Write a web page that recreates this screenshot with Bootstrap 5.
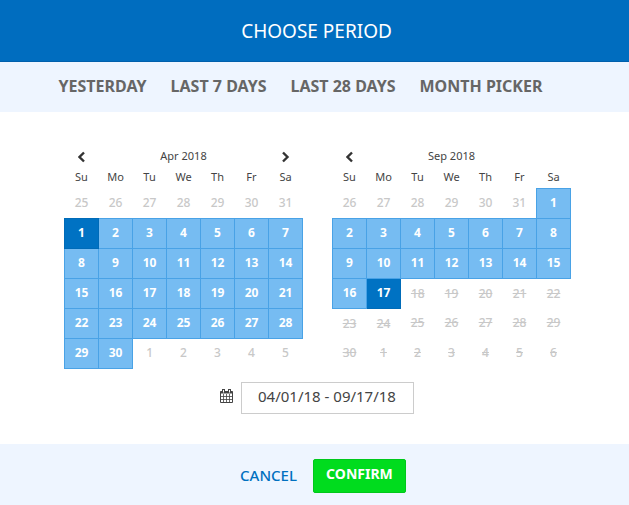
<!DOCTYPE html>
<html lang="en">
<head>
<meta charset="utf-8">
<meta name="viewport" content="width=device-width, initial-scale=1">
<title>Choose period</title>
<link href="https://cdn.jsdelivr.net/npm/bootstrap@5.3.0/dist/css/bootstrap.min.css" rel="stylesheet">
<style>
body { font-family: "Noto Sans", "Open Sans", sans-serif; color: #444; background: #fff; }
.title-bar { background: #006dbf; border-bottom: 1px solid #005fac; padding: 16px 12px 15px 16px; }
.title-bar h1 { font-size: 19px; line-height: 30px; font-weight: 400; }
.tint { background: #eef5ff; }
.presets { gap: 24px; padding: 12px 28px 14px 0; }
.preset { font-size: 16px; line-height: 24px; font-weight: 700; color: #666; }
.months { gap: 29px; padding: 33px 0 0 6px; }
.cal { border-collapse: collapse; table-layout: fixed; width: 239px; font-size: 12px; text-align: center; }
.cal th { font-size: 11px; font-weight: 400; height: 22px; padding: 0; line-height: 20px; }
.cal tr:first-child th { height: 21px; }
.cal td { height: 30px; padding: 0; color: #c8c8c8; }
.cal button { display: block; width: 100%; border: 0; padding: 0; background: none; color: inherit; font-weight: inherit; line-height: 20px; }
.cal td button { line-height: 28px; font-weight: 500; }
.cal .in { background: #76bcf2; border: 1px solid #49a2e6; color: #fff; }
.cal .end { background: #0072c3; border: 1px solid #006bb8; color: #fff; }
.cal .in button, .cal .end button { font-weight: 700; }
.cal .off button { text-decoration: line-through; }
.range { gap: 7px; padding: 13px 0 30px 4px; }
.range label { padding-bottom: 4px; }
.range input { width: 173px; height: 32px; border: 1px solid #ccc; border-radius: 0; padding: 0 8px 4px; font-size: 15px; text-align: center; color: #444; }
.actions { gap: 16px; padding: 15px 0 12px 17px; }
.cancel { color: #0070c0; font-size: 15px; line-height: 24px; font-weight: 500; }
.confirm { --bs-btn-bg: #00dc1e; --bs-btn-hover-bg: #00c81b; --bs-btn-color: #fff; --bs-btn-hover-color: #fff; --bs-btn-border-color: #00c81b; border-radius: 2px; width: 93px; height: 34px; padding: 0 0 4px; font-size: 14px; font-weight: 700; }
</style>
<script src="https://cdn.jsdelivr.net/npm/bootstrap@5.3.0/dist/js/bootstrap.bundle.min.js" defer></script>
</head>
<body class="min-vh-100 d-flex flex-column">
<header class="title-bar text-white text-center"><h1 class="m-0">CHOOSE PERIOD</h1></header>
<nav class="tint presets d-flex justify-content-center" aria-label="Presets">
  <a href="#" class="preset text-decoration-none">YESTERDAY</a>
  <a href="#" class="preset text-decoration-none">LAST 7 DAYS</a>
  <a href="#" class="preset text-decoration-none">LAST 28 DAYS</a>
  <a href="#" class="preset text-decoration-none">MONTH PICKER</a>
</nav>
<main>
  <div class="months d-flex justify-content-center">
    <table class="cal">
      <thead>
        <tr><th><button type="button" aria-label="Previous month"><svg width="8" height="12" viewBox="0 0 8 12" fill="none" stroke="#333" stroke-width="2.4"><path d="M6 1.500 1.500 6 6 10.500"/></svg></button></th><th colspan="5">Apr 2018</th><th><button type="button" aria-label="Next month"><svg width="8" height="12" viewBox="0 0 8 12" fill="none" stroke="#333" stroke-width="2.4"><path d="M1 1.500 5.500 6 1 10.500"/></svg></button></th></tr>
        <tr><th>Su</th><th>Mo</th><th>Tu</th><th>We</th><th>Th</th><th>Fr</th><th>Sa</th></tr>
      </thead>
      <tbody>
        <tr><td><button>25</button></td><td><button>26</button></td><td><button>27</button></td><td><button>28</button></td><td><button>29</button></td><td><button>30</button></td><td><button>31</button></td></tr>
        <tr><td class="end"><button>1</button></td><td class="in"><button>2</button></td><td class="in"><button>3</button></td><td class="in"><button>4</button></td><td class="in"><button>5</button></td><td class="in"><button>6</button></td><td class="in"><button>7</button></td></tr>
        <tr><td class="in"><button>8</button></td><td class="in"><button>9</button></td><td class="in"><button>10</button></td><td class="in"><button>11</button></td><td class="in"><button>12</button></td><td class="in"><button>13</button></td><td class="in"><button>14</button></td></tr>
        <tr><td class="in"><button>15</button></td><td class="in"><button>16</button></td><td class="in"><button>17</button></td><td class="in"><button>18</button></td><td class="in"><button>19</button></td><td class="in"><button>20</button></td><td class="in"><button>21</button></td></tr>
        <tr><td class="in"><button>22</button></td><td class="in"><button>23</button></td><td class="in"><button>24</button></td><td class="in"><button>25</button></td><td class="in"><button>26</button></td><td class="in"><button>27</button></td><td class="in"><button>28</button></td></tr>
        <tr><td class="in"><button>29</button></td><td class="in"><button>30</button></td><td><button>1</button></td><td><button>2</button></td><td><button>3</button></td><td><button>4</button></td><td><button>5</button></td></tr>
      </tbody>
    </table>
    <table class="cal">
      <thead>
        <tr><th><button type="button" aria-label="Previous month"><svg width="8" height="12" viewBox="0 0 8 12" fill="none" stroke="#333" stroke-width="2.4"><path d="M6 1.500 1.500 6 6 10.500"/></svg></button></th><th colspan="5">Sep 2018</th><th></th></tr>
        <tr><th>Su</th><th>Mo</th><th>Tu</th><th>We</th><th>Th</th><th>Fr</th><th>Sa</th></tr>
      </thead>
      <tbody>
        <tr><td><button>26</button></td><td><button>27</button></td><td><button>28</button></td><td><button>29</button></td><td><button>30</button></td><td><button>31</button></td><td class="in"><button>1</button></td></tr>
        <tr><td class="in"><button>2</button></td><td class="in"><button>3</button></td><td class="in"><button>4</button></td><td class="in"><button>5</button></td><td class="in"><button>6</button></td><td class="in"><button>7</button></td><td class="in"><button>8</button></td></tr>
        <tr><td class="in"><button>9</button></td><td class="in"><button>10</button></td><td class="in"><button>11</button></td><td class="in"><button>12</button></td><td class="in"><button>13</button></td><td class="in"><button>14</button></td><td class="in"><button>15</button></td></tr>
        <tr><td class="in"><button>16</button></td><td class="end"><button>17</button></td><td class="off"><button>18</button></td><td class="off"><button>19</button></td><td class="off"><button>20</button></td><td class="off"><button>21</button></td><td class="off"><button>22</button></td></tr>
        <tr><td class="off"><button>23</button></td><td class="off"><button>24</button></td><td class="off"><button>25</button></td><td class="off"><button>26</button></td><td class="off"><button>27</button></td><td class="off"><button>28</button></td><td class="off"><button>29</button></td></tr>
        <tr><td class="off"><button>30</button></td><td class="off"><button>1</button></td><td class="off"><button>2</button></td><td class="off"><button>3</button></td><td class="off"><button>4</button></td><td class="off"><button>5</button></td><td class="off"><button>6</button></td></tr>
      </tbody>
    </table>
  </div>
  <div class="range d-flex justify-content-center align-items-center">
    <label for="range" aria-label="Date range" class="d-flex"><svg width="14" height="14" viewBox="0 0 14 14" fill="none" stroke="#444"><path d="M.5 2.500h12v11H.5z"/><path d="M3.500 5v8.500M6.500 5v8.500M9.500 5v8.500M.5 7.500h12M.5 10.500h12" stroke-width=".8"/><path d="M.5 3.500h12" stroke-width="2"/><path d="M3.500 0v4M9.500 0v4" stroke-width="3"/><path d="M3.500 1v2.500M9.500 1v2.500" stroke="#fff"/></svg></label>
    <input id="range" type="text" value="04/01/18 - 09/17/18">
  </div>
</main>
<footer class="tint actions flex-grow-1 d-flex justify-content-center align-items-start">
  <a href="#" class="cancel text-decoration-none py-1">CANCEL</a>
  <button type="button" class="btn confirm">CONFIRM</button>
</footer>
</body>
</html>
